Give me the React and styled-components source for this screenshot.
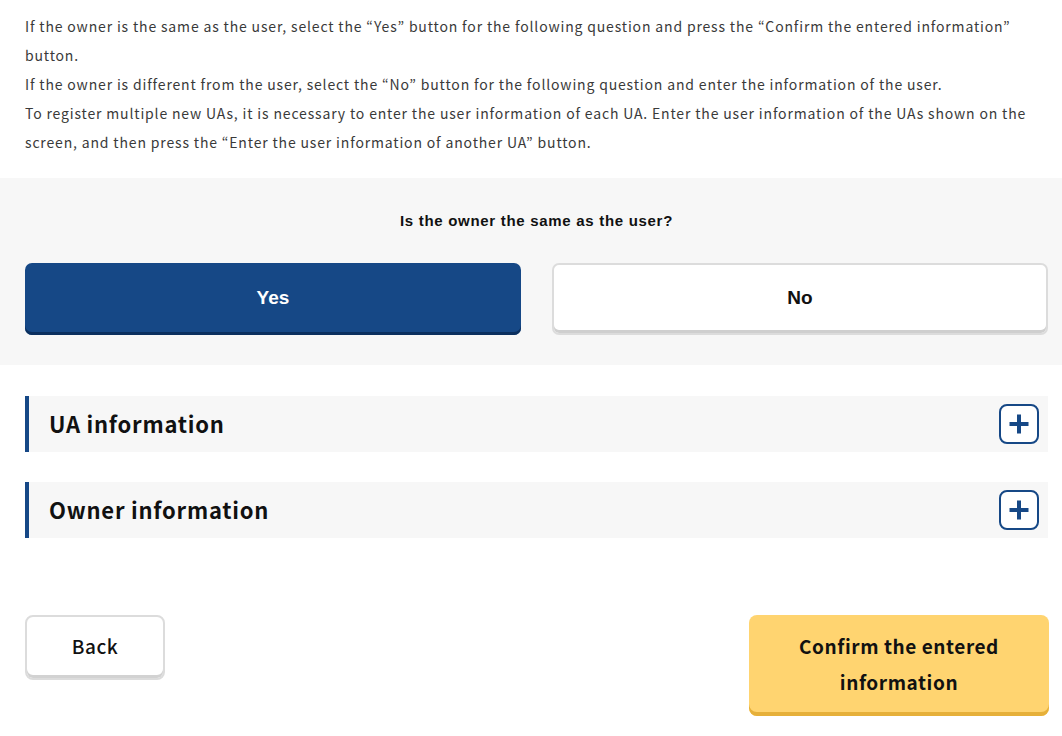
import React from "react";
import styled, { createGlobalStyle } from "styled-components";

const Global = createGlobalStyle`
  html, body { margin: 0; padding: 0; background: #fff; }
  body { font-family: "Noto Sans CJK JP", "Noto Sans", sans-serif; color: #333; }
  * { box-sizing: border-box; }
`;

const Page = styled.div`
  width: 1062px;
  display: flex;
  flex-direction: column;
`;

const Intro = styled.div`
  padding: 12px 14px 0 25px;
  font-size: 14px;
  line-height: 29px;
  color: #3a3a3a;
  letter-spacing: 0.84px;
  p { margin: 0; }
`;

const QuestionPanel = styled.section`
  margin-top: 21px;
  background: #f7f7f7;
  padding: 32px 14px 30px 25px;
  display: flex;
  flex-direction: column;
  align-items: stretch;
`;

const Question = styled.div`
  font-family: "Liberation Sans", Arial, sans-serif;
  font-weight: bold;
  font-size: 15px;
  line-height: 22px;
  letter-spacing: 0.7px;
  text-align: center;
  color: #111;
`;

const Choices = styled.div`
  margin-top: 31px;
  display: grid;
  grid-template-columns: 1fr 1fr;
  gap: 31px;
`;

const Choice = styled.button`
  height: 72px;
  border-radius: 7px;
  font-family: "Liberation Sans", Arial, sans-serif;
  font-weight: bold;
  font-size: 19px;
  cursor: pointer;
  background: ${(p) => (p.$active ? "#164886" : "#fff")};
  color: ${(p) => (p.$active ? "#fff" : "#111")};
  border: ${(p) => (p.$active ? "0" : "2px solid #dcdcdc")};
  box-shadow: ${(p) => (p.$active ? "inset 0 -3px 0 #0b2f5e" : "inset 0 -3px 0 #cfcfcf")};
  padding: 0 0 3px;
`;

const Sections = styled.div`
  margin-top: 31px;
  padding: 0 14px 0 25px;
  display: flex;
  flex-direction: column;
  gap: 30px;
`;

const AccordionHeader = styled.div`
  height: 56px;
  background: #f7f7f7;
  border-left: 4px solid #164886;
  display: flex;
  align-items: center;
  justify-content: space-between;
  padding: 0 9px 0 20px;
`;

const AccordionTitle = styled.h2`
  margin: 0;
  font-size: 22px;
  font-weight: bold;
  color: #111;
  letter-spacing: 0.035em;
  line-height: 30px;
  padding-bottom: 2px;
`;

const PlusButton = styled.button`
  width: 40px;
  height: 40px;
  padding: 0;
  border: 0;
  background: transparent;
  display: flex;
  cursor: pointer;
`;

const Footer = styled.div`
  margin-top: 77px;
  padding: 0 13px 20px 25px;
  display: flex;
  justify-content: space-between;
  align-items: flex-start;
`;

const FooterButton = styled.button`
  width: ${(p) => p.$w}px;
  padding: 13px 10px 16px;
  border-radius: 8px;
  font-size: 19px;
  line-height: 36px;
  cursor: pointer;
  color: #111;
  font-family: "Noto Sans CJK JP", "Noto Sans", sans-serif;
  letter-spacing: 0.03em;
  ${(p) =>
    p.$primary
      ? `
    background: #ffd470;
    border: 0;
    box-shadow: inset 0 -4px 0 #e6b03a;
    font-weight: bold;
  `
      : `
    background: #fff;
    border: 2px solid #dcdcdc;
    box-shadow: inset 0 -3px 0 #d2d2d2;
    padding: 11px 10px 14px;
    font-weight: 500;
  `}
`;

const PlusIcon = () => (
  <svg width="40" height="40" viewBox="0 0 40 40">
    <rect x="1" y="1" width="38" height="38" rx="7" fill="#fff" stroke="#164886" strokeWidth="2" />
    <path d="M20 10.5V29.5M10.5 20H29.5" stroke="#164886" strokeWidth="4" />
  </svg>
);

export default function App() {
  return (
    <Page>
      <Global />
      <Intro>
        <p>
          If the owner is the same as the user, select the “Yes” button for the following question and press the
          “Confirm the entered information” button.
        </p>
        <p>If the owner is different from the user, select the “No” button for the following question and enter the information of the user.</p>
        <p>
          To register multiple new UAs, it is necessary to enter the user information of each UA. Enter the user
          information of the UAs shown on the screen, and then press the “Enter the user information of another UA”
          button.
        </p>
      </Intro>
      <QuestionPanel>
        <Question>Is the owner the same as the user?</Question>
        <Choices>
          <Choice $active>Yes</Choice>
          <Choice>No</Choice>
        </Choices>
      </QuestionPanel>
      <Sections>
        <AccordionHeader>
          <AccordionTitle>UA information</AccordionTitle>
          <PlusButton aria-label="expand">
            <PlusIcon />
          </PlusButton>
        </AccordionHeader>
        <AccordionHeader>
          <AccordionTitle>Owner information</AccordionTitle>
          <PlusButton aria-label="expand">
            <PlusIcon />
          </PlusButton>
        </AccordionHeader>
      </Sections>
      <Footer>
        <FooterButton $w={140}>Back</FooterButton>
        <FooterButton $w={300} $primary>
          Confirm the entered information
        </FooterButton>
      </Footer>
    </Page>
  );
}
